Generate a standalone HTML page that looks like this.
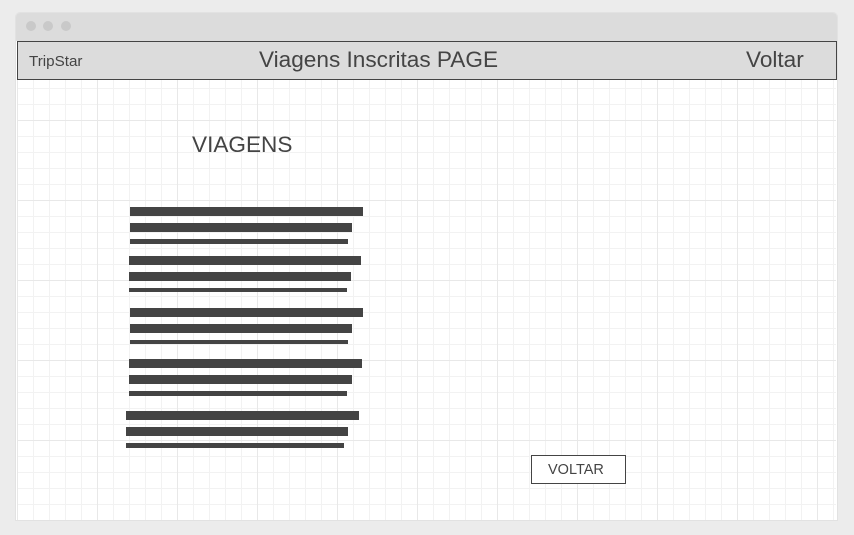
<!DOCTYPE html>
<html><head><style>
body{margin:0;width:854px;height:535px;background:#ececec;position:relative;font-family:"Liberation Sans",sans-serif;overflow:hidden}
.win{position:absolute;left:16px;top:13px;width:821px;height:507px;background:#fff;border-radius:4px 4px 0 0;box-shadow:0 0 0 1px #e2e2e2}
.top{position:absolute;left:0;top:0;width:821px;height:28px;background:#dcdcdc;border-radius:4px 4px 0 0}
.dot{position:absolute;top:8px;width:10px;height:10px;border-radius:50%;background:#c9c9c9}
.grid{position:absolute;left:17px;top:80px;width:819px;height:440px;
background-image:
linear-gradient(to right,#e8e8e8 1px,transparent 1px),
linear-gradient(to bottom,#e8e8e8 1px,transparent 1px),
linear-gradient(to right,#f2f2f2 1px,transparent 1px),
linear-gradient(to bottom,#f2f2f2 1px,transparent 1px);
background-size:80px 80px,80px 80px,16px 16px,16px 16px;
background-position:0 0,0 40px,0 0,0 8px}
.hdr{position:absolute;left:17px;top:41px;width:818px;height:37px;background:#dcdcdc;border:1px solid #444}
.t{position:absolute;color:#444;white-space:nowrap}
.b{position:absolute;background:#444}
.btn{position:absolute;left:531px;top:455px;width:93px;height:27px;border:1px solid #444;background:#fff}
</style></head><body>
<div class="win"><div class="top"><div class="dot" style="left:10px"></div><div class="dot" style="left:27px"></div><div class="dot" style="left:45px"></div></div></div>
<div class="grid"></div>
<div class="hdr"></div>
<div class="t" style="left:29px;top:53px;font-size:15.2px">TripStar</div>
<div class="t" style="left:259px;top:47px;font-size:22.6px">Viagens Inscritas PAGE</div>
<div class="t" style="left:746px;top:47px;font-size:22.6px">Voltar</div>
<div class="t" style="left:192px;top:132px;font-size:22.6px">VIAGENS</div>
<div class="b" style="left:130px;top:207px;width:233px;height:9px"></div>
<div class="b" style="left:130px;top:223px;width:222px;height:9px"></div>
<div class="b" style="left:130px;top:239px;width:218px;height:5px"></div>
<div class="b" style="left:129px;top:256px;width:232px;height:9px"></div>
<div class="b" style="left:129px;top:272px;width:222px;height:9px"></div>
<div class="b" style="left:129px;top:288px;width:218px;height:4px"></div>
<div class="b" style="left:130px;top:308px;width:233px;height:9px"></div>
<div class="b" style="left:130px;top:324px;width:222px;height:9px"></div>
<div class="b" style="left:130px;top:340px;width:218px;height:4px"></div>
<div class="b" style="left:129px;top:359px;width:233px;height:9px"></div>
<div class="b" style="left:129px;top:375px;width:223px;height:9px"></div>
<div class="b" style="left:129px;top:391px;width:218px;height:5px"></div>
<div class="b" style="left:126px;top:411px;width:233px;height:9px"></div>
<div class="b" style="left:126px;top:427px;width:222px;height:9px"></div>
<div class="b" style="left:126px;top:443px;width:218px;height:5px"></div>
<div class="btn"></div>
<div class="t" style="left:548px;top:462px;font-size:14.5px">VOLTAR</div>
</body></html>
